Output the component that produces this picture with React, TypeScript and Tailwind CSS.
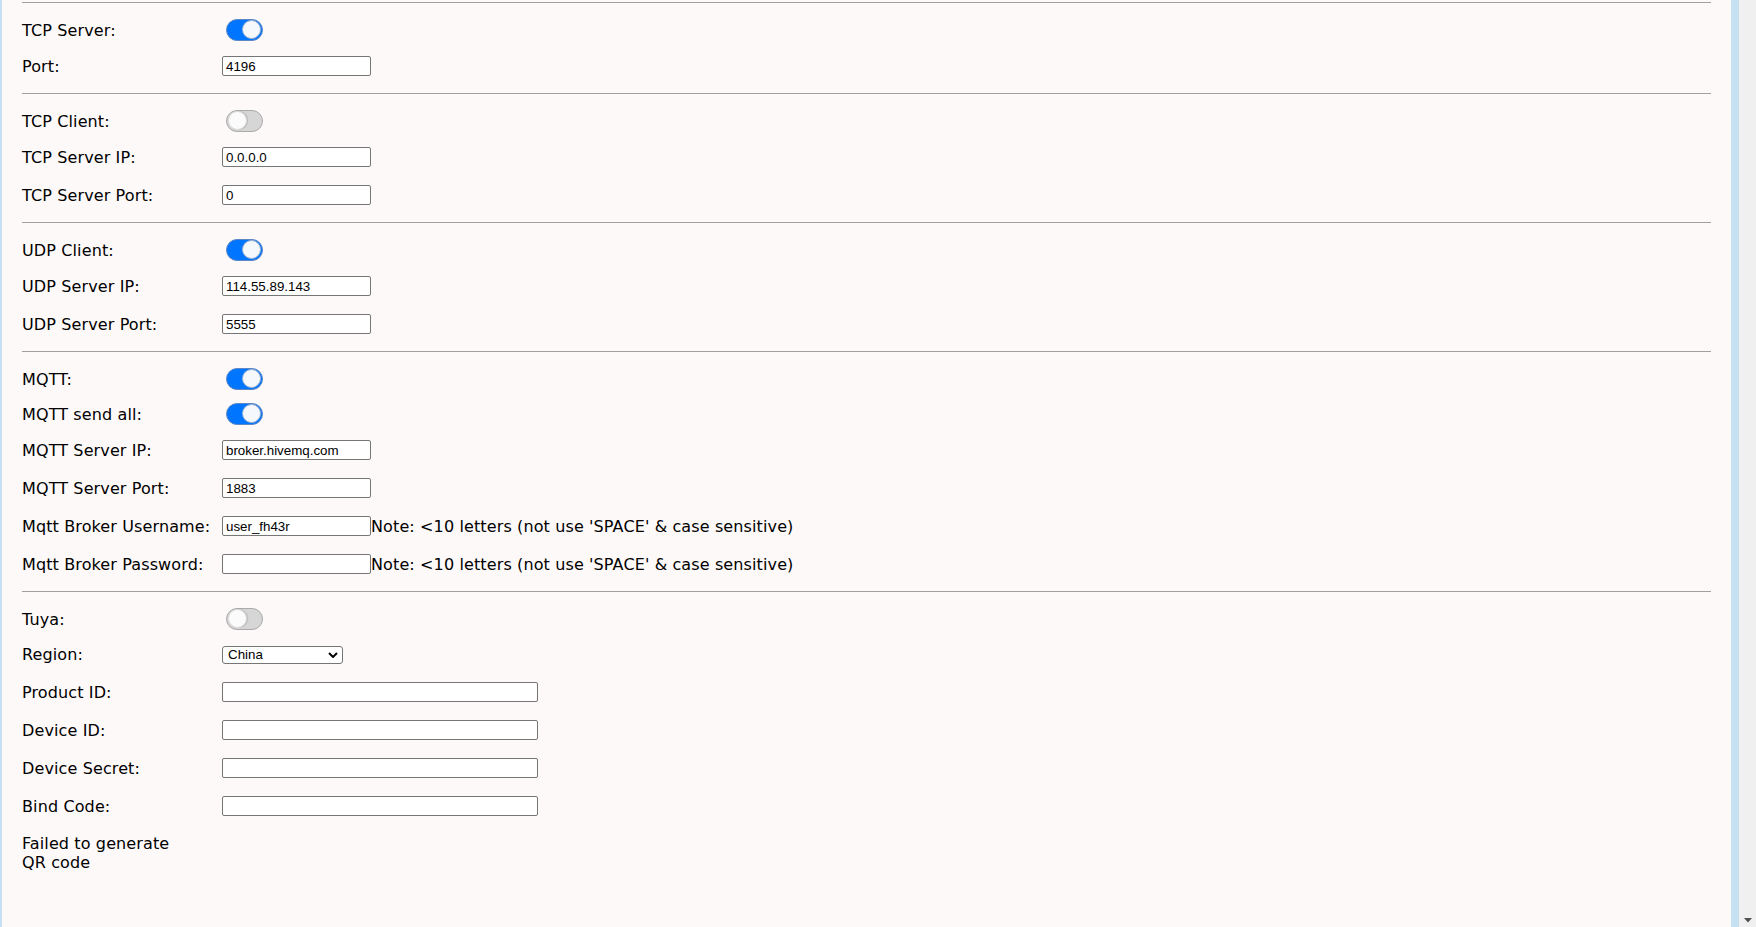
import React from "react";

const labelFont = { fontFamily: '"DejaVu Sans", Verdana, sans-serif' };

function Line() {
  return <div className="h-px w-full bg-[#a0a0a0]" />;
}

function Toggle({ on }: { on: boolean }) {
  return on ? (
    <div className="flex h-[22px] w-[37px] items-center justify-end rounded-full border border-[#5c86c4] bg-[#0075ff] pr-px">
      <div className="h-[19px] w-[19px] rounded-full border border-[#9fb3d1] bg-[#f5f8fc]" />
    </div>
  ) : (
    <div className="flex h-[22px] w-[37px] items-center justify-start rounded-full border border-[#a9a9a9] bg-[#d6d6d6] pl-px">
      <div className="h-[19px] w-[19px] rounded-full border border-[#dcdcdc] bg-[#fbfbfb] shadow-[1px_0_1px_rgba(0,0,0,0.15)]" />
    </div>
  );
}

function TextBox({ value = "", wide = false }: { value?: string; wide?: boolean }) {
  return (
    <div
      className={`flex h-[20px] ${wide ? "w-[316px]" : "w-[149px]"} items-center rounded-[2px] border border-[#767676] bg-white px-[3px] text-[13.33px] tracking-normal text-black`}
      style={{ fontFamily: '"Liberation Sans", Arial, sans-serif' }}
    >
      {value}
    </div>
  );
}

function ToggleRow({ label, on }: { label: string; on: boolean }) {
  return (
    <div className="flex h-[35px] items-center">
      <div className="w-[200px] shrink-0 pt-px">{label}</div>
      <div className="pl-[4px]">
        <Toggle on={on} />
      </div>
    </div>
  );
}

function InputRow({
  label,
  value,
  wide,
  note,
}: {
  label: string;
  value?: string;
  wide?: boolean;
  note?: boolean;
}) {
  return (
    <div className="flex h-[38px] items-center">
      <div className="w-[200px] shrink-0">{label}</div>
      <TextBox value={value} wide={wide} />
      {note && <span>Note: &lt;10 letters (not use 'SPACE' &amp; case sensitive)</span>}
    </div>
  );
}

function Section({ children }: { children: React.ReactNode }) {
  return <div className="pb-[8px] pt-[9px]">{children}</div>;
}

export default function App() {
  return (
    <div
      className="flex h-[927px] w-full overflow-hidden bg-[#fdf9f8] text-[16px] leading-[19px] tracking-[0.12px] text-black"
      style={labelFont}
    >
      <div className="w-[2px] shrink-0 bg-[#c5e0f0]" />
      <main className="flex-1 px-[20px] pt-[2px]">
        <Line />
        <Section>
          <ToggleRow label="TCP Server:" on />
          <InputRow label="Port:" value="4196" />
        </Section>
        <Line />
        <Section>
          <ToggleRow label="TCP Client:" on={false} />
          <InputRow label="TCP Server IP:" value="0.0.0.0" />
          <InputRow label="TCP Server Port:" value="0" />
        </Section>
        <Line />
        <Section>
          <ToggleRow label="UDP Client:" on />
          <InputRow label="UDP Server IP:" value="114.55.89.143" />
          <InputRow label="UDP Server Port:" value="5555" />
        </Section>
        <Line />
        <Section>
          <ToggleRow label="MQTT:" on />
          <ToggleRow label="MQTT send all:" on />
          <InputRow label="MQTT Server IP:" value="broker.hivemq.com" />
          <InputRow label="MQTT Server Port:" value="1883" />
          <InputRow label="Mqtt Broker Username:" value="user_fh43r" note />
          <InputRow label="Mqtt Broker Password:" value="" note />
        </Section>
        <Line />
        <div className="pt-[9px]">
          <ToggleRow label="Tuya:" on={false} />
          <div className="flex h-[37px] items-center">
            <div className="w-[200px] shrink-0">Region:</div>
            <div
              className="flex h-[18px] w-[121px] items-center justify-between rounded-[3px] border border-[#767676] bg-white pl-[5px] pr-[4px] text-[13.33px] tracking-normal text-black"
              style={{ fontFamily: '"Liberation Sans", Arial, sans-serif' }}
            >
              <span>China</span>
              <svg width="10" height="6" viewBox="0 0 10 6">
                <path d="M1 1 L5 5 L9 1" fill="none" stroke="#000" strokeWidth="2" />
              </svg>
            </div>
          </div>
          <InputRow label="Product ID:" wide />
          <InputRow label="Device ID:" wide />
          <InputRow label="Device Secret:" wide />
          <InputRow label="Bind Code:" wide />
          <div className="mt-[9px] w-[160px]">Failed to generate QR code</div>
        </div>
      </main>
      <div className="w-[8px] shrink-0 bg-[#c5e0f0]" />
      <div className="flex w-[17px] shrink-0 flex-col items-center justify-end bg-[#f0f0f0] pb-[4px]">
        <svg width="8" height="5" viewBox="0 0 8 5">
          <path d="M0 0 H8 L4 4.5 Z" fill="#505050" />
        </svg>
      </div>
    </div>
  );
}
